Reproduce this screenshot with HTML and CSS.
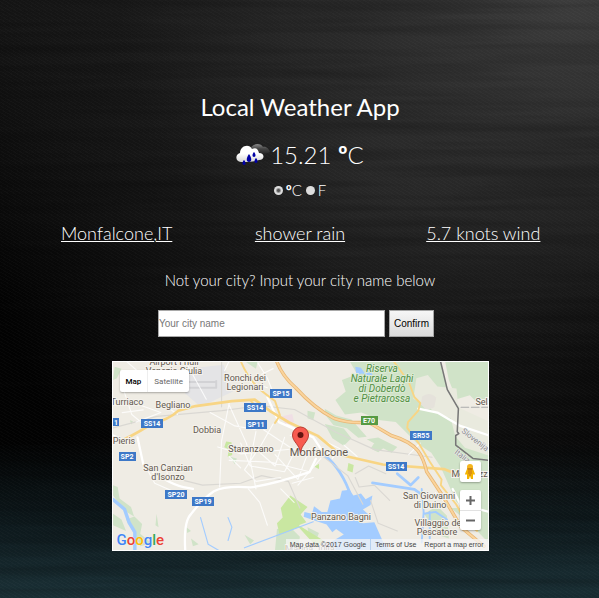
FILE: index.html
```html
<!DOCTYPE html>
<html lang="en">
<head>
<meta charset="utf-8">
<meta name="viewport" content="width=device-width, initial-scale=1">
<title>Local Weather App</title>
<link rel="stylesheet" href="styles.css">
</head>
<body>
<svg class="wood" aria-hidden="true">
  <filter id="grain" x="0" y="0" width="100%" height="100%">
    <feTurbulence type="fractalNoise" baseFrequency=".004 .09" numOctaves="3" seed="8"/>
    <feColorMatrix values="0 0 0 0 0  0 0 0 0 0  0 0 0 0 0  1.6 0 0 0 -.6"/>
  </filter>
  <rect width="100%" height="100%" filter="url(#grain)"/>
</svg>
<main class="app">
  <h1 class="title">Local Weather App</h1>
  <div class="temp">
    <svg class="weather-icon" viewBox="0 0 34 24" aria-hidden="true">
      <defs>
        <linearGradient id="dark" x2="0" y2="1"><stop stop-color="#888"/><stop offset=".5" stop-color="#444"/><stop offset="1" stop-color="#292929"/></linearGradient>
        <linearGradient id="light" x2="0" y2="1"><stop offset=".5" stop-color="#fff"/><stop offset="1" stop-color="#d4d4d4"/></linearGradient>
      </defs>
      <path d="M15 5C17 0 25 0 27 4c3-1 6 2 7 5-3 2-10 2-15 0z" fill="url(#dark)"/>
      <path d="M5 19C-1 19-1 11 4 10 4 3 13 0 16 6c4-2 6 0 7 4 6 0 6 7 0 7-5 2-12 2-18 2z" fill="url(#light)"/>
      <path d="M13 11c3 4 3 8 0 8s-3-4 0-8zM18 9c2 2 2 5 0 5s-2-3 0-5zM8 17c2 2 2 5 0 5s-2-3 0-5zM20 15c2 2 2 5 0 5s-2-3 0-5z" fill="#0000a5"/>
    </svg>
    <span>15.21 <b>º</b>C</span>
  </div>
  <div class="units">
    <label><input type="radio" name="unit" checked> <span><b>º</b>C</span></label>
    <label><input type="radio" name="unit"> <span>F</span></label>
  </div>
  <div class="facts"><span>Monfalcone,IT</span><span>shower rain</span><span>5.7 knots wind</span></div>
  <form class="search">
    <label class="prompt" for="city">Not your city? Input your city name below</label>
    <div class="fields">
      <input id="city" type="text" placeholder="Your city name">
      <button type="button">Confirm</button>
    </div>
  </form>
  <section class="map" aria-label="Map">
    <svg class="map-art" viewBox="113 362 375 188" preserveAspectRatio="xMidYMid slice">
      <rect x="0" y="300" width="700" height="300" fill="#efece4"/>
      <g transform="scale(.382)" fill="none" stroke-linejoin="round" stroke-linecap="round">
        <g fill="#d0e3c8">
          <path d="M915 945l20 35-40 15 10 30-27 22 25 38 43-5 50 20 40 5 55 55 38 25 25 38 40 90 50 45 40 5V1160l-35-40-45-20-2-35-30-45-20-75z"/>
          <path d="M1165 945h115v100l-30 10-20-20-35 10-20-50zM850 1070l30 18 40 10 40 45-22 3-30-25-35-8-20-25zM850 1110l50 12 20 25-20 20-30-20zM960 1150l30-5 50 25-15 15zM805 1075l20 5-5 20-15-5zM980 1160l25 12-15 12-20-10z"/>
          <path d="M296 1270l12 5 5 30 30 22 8 25-25-15-30-40zM330 1360l22-8 20 20-5 25 30 25-30 8-20-40zM296 1345l22 15 12 30-34-15zM300 960l18 5-12 25-10 5zM640 945h35l-5 20zM725 1385l35-5 25 25-5 35h-60zM805 1380l30 15-10 25-15-10zM640 1400l25 15-10 10zM1110 1345l35-20 25 25 5 60-30-10zM1180 1330l50 40 48 50v-70l-40-20z"/>
          <path d="M410 1345l5 35-8-5zM488 1380l12 10-10 5zM500 1410l20 15-15 5zM340 1100l8 3-4 8zM600 1195l20 5-5 15zM880 1180l12 5-5 10z"/>
        </g>
        <path d="M1090 990l30-8 25 30 50 5 5 50 77 35v90l-60-20-50-60-45-48-40-20z" fill="#e9eade"/>
        <path d="M1105 1070l75 25 15 60-25-5-30-30-40-15z" fill="#d0e3c8"/>
        <path d="M1105 1038q20-15 37 3l-5 25-20 8-15-15z" fill="#e5e2db"/>
        <path d="M490 965l95-10 25 70-85 40-40-35z" fill="#e4e4e6"/>
        <path d="M492 1000h74M566 997v18h-68" stroke="#d2d2d5" stroke-width="5"/>
        <path d="M735 1090l30-6 5 20-20 10z" fill="#f0dfe5"/>
        <path d="M760 1297l45 30-18 20 15 20-20 8 65 40-20 15-45-50-50 20-7-30 15-15-5-25zM823 1222l12-8v14zM592 1156l-5 15 12 5-3 20 12-5-2-33zM912 1212l14 5-3 20-14-5z" fill="#c9e7a1"/>
        <path d="M797 1340l20 5 5-20 20 15 15 0 8-30 25-5 5-20 20-3 10 15 20-5 12 15 18-10-5 25-20 12 15 13-25 15 10 8 30-3 22 50 20 25v10H850l20-35 30-18-20-14-10 8-15-20-30-10-30-10z" fill="#a3ccff"/>
        <path d="M930 960l15 3 10 15 15-5 8 12-15 3-15-10-15 3zM1055 985l15 5-8 10z" fill="#a3ccff"/>
        <g stroke="#a3ccff">
          <path d="M296 1308l30 25 12 35 15 25v50" stroke-width="9"/>
          <path d="M850 1192q45 35 70 110" stroke-width="7"/>
          <path d="M975 1264l110 17 25 18M1040 1240l35 30 20-20" stroke-width="7"/>
          <path d="M1104 1280l5 60-5 80M1125 1340v70M1110 1345l30-5 30 20" stroke-width="5"/>
          <path d="M880 1345l45-15M640 1434l180-68M525 1355l20 70 35 20M597 1355l10 25-10 35" stroke-width="3"/>
        </g>
        <g stroke="#dad8d3" stroke-width="3">
          <path d="M296 1120l115-30 170-15 100-13 90 10 110 60 100 45 150 20M580 945v120M470 1255l60 15 100-5 55-20 70 15 30 70M930 1240l35-20 45 20M930 1250l10 25 40-5 40 40M820 1175l90 70 40 75M970 1310l20 60 50 20"/>
        </g>
        <g stroke="#fff" stroke-width="3" opacity=".8">
          <path d="M330 945l40 35M296 1060h70l55 20-65 25M430 1060l35 25M320 1010l25 75 30 25M320 1080l55-7M485 945l55 100M600 1055l-20 100-5 120M600 1060l45 100 5 20M550 1080l65 35 55 10M570 1170l60 18 130-12M600 1205l110 5 100 25M670 1130l-15 75 15 75M715 1110l-40 70 45 40 25-75M690 1125l75 50 50 5M630 1160l25 60 90 15 25-50M650 1280l30 35 20 60M670 1185l-30 45 30 30 65-10M720 1190l60 65 30-80M600 1195l30 30M750 1110l40 20-30 10M720 1040l-20-50-25-40M655 1000l45 15M685 980l30-15M375 1210l30 55 80 35M480 1245l-40 15-5-45M600 945l-12 25M840 1200l-60 70M850 1155l40 20-20 25M900 1165l35 30M1070 1190l30-30M1140 1290l40 40M765 1265l55-15M735 1280l35 35"/>
        </g>
        <path d="M296 1140l35 15M360 1145l15 70q60 50 105 60l25 5M485 1441q-5-75 15-95 30-40 60-60 30-15 95-10 60-8 155-40l17-35M700 1040l30 65 90 40 20 30M1095 1070l50 10 60 35 75 25M1280 1340l-75-20-20-40" stroke="#fff" stroke-width="6"/>
        <g stroke="#f8d584">
          <path d="M322 1152q50-25 75-43 45-10 70-34l45-12 95-13 60-4 40 30 50 30 75 35 60 50 110 25 160 12 50 20 25 10" stroke-width="7"/>
          <path d="M630 945q25 60 70 90l20 15 13 37-13 20M1030 945l40 55 15 40 15 15-5 20-27 30-2 15 30 40 30 50 30 45-2 15 40 50 25 45 30 25M655 1048l10 10" stroke-width="5"/>
        </g>
        <path d="M724 945q15 40 50 70 50 55 100 80 45 15 90 10l60 35q50 15 70 40 15 20 23 55l40 60 50 85 60 50" stroke="#e7b675" stroke-width="9"/>
        <path d="M724 945q15 40 50 70 50 55 100 80 45 15 90 10l60 35q50 15 70 40 15 20 23 55l40 60 50 85 60 50" stroke="#fbd49c" stroke-width="5"/>
        <path d="M1153 945l18 75 29 50-3 60 4 5-8 5v25l45 35 42 5" stroke="#777" stroke-width="4"/>
        <path d="M1207 1066h75" stroke="#aaa" stroke-width="3" stroke-dasharray="20 7"/>
      </g>
      <g class="shields">
        <g fill="#3d78c7"><path d="M270 389h22v9h-22zM244 403h22v9h-22zM246 420h21v9h-21zM141 419h22v9h-22zM109 418h10v8h-10zM119 452h17v9h-17zM165 490h22v9h-22zM192 497h22v9h-22zM410 431h22v9h-22zM386 462h21v9h-21z"/></g>
        <path d="M361 416h17v9h-17z" fill="#579a43"/>
        <g class="road-names"><text x="281" y="396">SP15</text><text x="255" y="410">SS14</text><text x="256" y="427">SP11</text><text x="152" y="426">SS14</text><text x="116" y="425">1</text><text x="127" y="459">SP2</text><text x="176" y="497">SP20</text><text x="203" y="504">SP19</text><text x="421" y="438">SR55</text><text x="396" y="469">SS14</text><text x="369" y="423">E70</text></g>
      </g>
      <g class="places">
        <text x="174" y="365">Airport Friuli</text><text x="174" y="374">Venezia Giulia</text>
        <text x="245" y="381">Ronchi dei</text><text x="245" y="390">Legionari</text>
        <text x="127" y="405">Turriaco</text><text x="173" y="408">Begliano</text><text x="207" y="433">Dobbia</text>
        <text x="124" y="444">Pieris</text><text x="251" y="452">Staranzano</text>
        <text x="168" y="471">San Canzian</text><text x="168" y="480">d'Isonzo</text>
        <text x="341" y="520">Panzano Bagni</text>
        <text x="429" y="499">San Giovanni</text><text x="430" y="508">di Duino</text>
        <text x="439" y="526">Villaggio del</text><text x="437" y="535">Pescatore</text>
        <text x="484" y="405">Sela</text><text x="472" y="477">Medeazza</text><text x="310" y="552">Marina Julia</text>
        <text class="town" x="319" y="456">Monfalcone</text>
      </g>
      <g class="reserve"><text x="382" y="372">Riserva</text><text x="382" y="382">Naturale Laghi</text><text x="382" y="392">di Doberdò</text><text x="382" y="402">e Pietrarossa</text></g>
      <g class="nations"><text transform="translate(461 432) rotate(38)">Slovenija</text><text transform="translate(454 453) rotate(38)">Italia</text></g>
      <path d="M300.500 453c-1-9-8-11-8-18a8 8 0 0 1 16 0c0 7-7 9-8 18z" fill="#f85b50" stroke="#b73e35"/>
      <circle cx="300.500" cy="435" r="3" fill="#641410"/>
    </svg>
    <div class="map-types"><button type="button" class="active">Map</button><button type="button">Satellite</button></div>
    <div class="controls">
      <button type="button" class="tile" aria-label="Street View">
        <svg width="12" height="16" viewBox="0 0 12 16"><path d="M3 5h6l2 5-1 1-1-1v5H7l-1-3-1 3H3v-5l-1 1-1-1z" fill="#f4b400"/><path d="M4 6h4v4H4zM5 10h2v2H5z" fill="#db9211"/><circle cx="6" cy="3" r="3" fill="#f5b51d"/><path d="M3 4h6L8 6H4z" fill="#cc8410"/></svg>
      </button>
      <div class="zoom">
        <button type="button" aria-label="Zoom in"><svg width="9" height="9" viewBox="0 0 9 9"><path d="M4.500 0v9M0 4.500h9"/></svg></button>
        <button type="button" aria-label="Zoom out"><svg width="9" height="9" viewBox="0 0 9 9"><path d="M0 4.500h9"/></svg></button>
      </div>
    </div>
    <a class="google" href="#"><span class="blue">G</span><span class="red">o</span><span class="yellow">o</span><span class="blue">g</span><span class="green">l</span><span class="red">e</span></a>
    <div class="credits"><span>Map data ©2017 Google</span><a href="#">Terms of Use</a><a href="#">Report a map error</a></div>
  </section>
</main>
</body>
</html>
```
FILE: styles.css
```css
* { box-sizing: border-box; }
body {
  margin: 0;
  min-height: 100vh;
  color: #fff;
  font-family: Lato, sans-serif;
  font-weight: 300;
  background:
    repeating-linear-gradient(30deg, rgba(255,255,255,.02) 0 1px, transparent 1px 3px),
    linear-gradient(to bottom, transparent 74%, rgba(22,42,48,.6) 88%, #1b3137 100%),
    radial-gradient(ellipse 75% 60% at 95% 0, #3c3c3c, rgba(48,48,48,.6) 50%, transparent 100%),
    radial-gradient(ellipse 70% 75% at 65% 25%, #242424, transparent 100%),
    linear-gradient(to bottom, #161616, #030303 50%);
}
.wood { position: absolute; inset: 0; width: 100%; height: 100%; opacity: .25; }
.app {
  position: relative;
  display: flex;
  flex-direction: column;
  align-items: center;
  padding: 90px 24px 40px 25px;
}
button, input { font: inherit; margin: 0; }
button { border: 0; padding: 0; cursor: pointer; }
.title { margin: 0; font-size: 24px; line-height: 34px; font-weight: 400; }
.temp { display: flex; align-items: center; margin-top: 14px; font-size: 24px; line-height: 34px; }
.temp b, .units b { font-weight: 700; }
.weather-icon { width: 34px; height: 24px; }
.units { display: flex; gap: 4px; margin-top: 8px; font-size: 15px; line-height: 20px; }
.units label { display: flex; align-items: center; gap: 3px; }
.units input { appearance: none; width: 9px; height: 9px; border-radius: 50%; background: #ddd; }
.units input:checked { background: radial-gradient(circle, #555 0 1px, #ddd 3px); }
.facts {
  display: grid;
  grid-template-columns: repeat(3, 1fr);
  width: 100%;
  margin-top: 20px;
  font-size: 18px;
  line-height: 26px;
  text-align: center;
  text-decoration: underline;
  text-decoration-thickness: 1px;
}
.search { display: flex; flex-direction: column; align-items: center; width: 100%; }
.prompt { margin-top: 24px; font-size: 15px; line-height: 20px; }
.fields { display: flex; gap: 4px; margin-top: 20px; padding-right: 8px; font-family: "Liberation Sans", sans-serif; font-size: 10px; font-weight: 400; }
.fields input { width: 227px; height: 27px; padding: 0; border: 1px solid #a9a9a9; background: #fff; color: #222; }
.fields input::placeholder { color: #777; }
.fields button { padding: 0 4px; border: 1px solid #a6a6a6; background: linear-gradient(#f6f6f6, #dcdcdc); color: #000; }
.map {
  position: relative;
  width: 377px;
  max-width: 100%;
  height: 190px;
  margin-top: 24px;
  border: 1px solid #fff;
  overflow: hidden;
  font-family: Roboto, sans-serif;
  font-weight: 400;
}
.map-art { display: block; width: 100%; height: 100%; }
.places { font-size: 9px; text-anchor: middle; fill: #63594f; stroke: #f5f2ec; stroke-width: 2px; paint-order: stroke; }
.places .town { font-size: 11px; }
.road-names { font-size: 7px; font-weight: 700; text-anchor: middle; fill: #fff; }
.reserve { font-size: 10px; font-style: italic; text-anchor: middle; fill: #529044; stroke: #dcebd5; stroke-width: 2px; paint-order: stroke; }
.nations { font-size: 8px; fill: #8b8b8b; stroke: #eee; stroke-width: 1px; paint-order: stroke; }
.map-types { position: absolute; top: 8px; left: 7px; display: flex; height: 22px; border-radius: 2px; background: #fff; box-shadow: 0 1px 2px rgba(0,0,0,.3); font-size: 8px; }
.map-types button { padding: 0 6px; background: none; color: #666; }
.map-types .active { color: #000; font-weight: 500; border-right: 1px solid #eee; }
.controls { position: absolute; top: 99px; right: 7px; display: flex; flex-direction: column; gap: 8px; }
.tile, .zoom { width: 21px; border-radius: 2px; background: #fff; box-shadow: 0 1px 2px rgba(0,0,0,.3); }
.tile { display: grid; place-items: center; height: 21px; }
.zoom button { display: grid; place-items: center; width: 100%; height: 20px; background: none; }
.zoom button + button { border-top: 1px solid #e2e2e2; }
.zoom path { stroke: #666; stroke-width: 2; }
.google { position: absolute; left: 4px; bottom: 1px; font-size: 15px; line-height: 18px; font-weight: 500; text-decoration: none; text-shadow: 0 0 1px #fff; }
.blue { color: #4285f4; }
.red { color: #ea4335; }
.yellow { color: #fbbc05; }
.green { color: #34a853; }
.credits { position: absolute; right: 0; bottom: 0; display: flex; background: rgba(245,245,245,.75); color: #444; font-family: "Liberation Sans", sans-serif; font-size: 7px; line-height: 11px; }
.credits span, .credits a { padding: 0 4px; color: inherit; text-decoration: none; }
.credits span { border-right: 1px solid #b5d0ef; }
```
